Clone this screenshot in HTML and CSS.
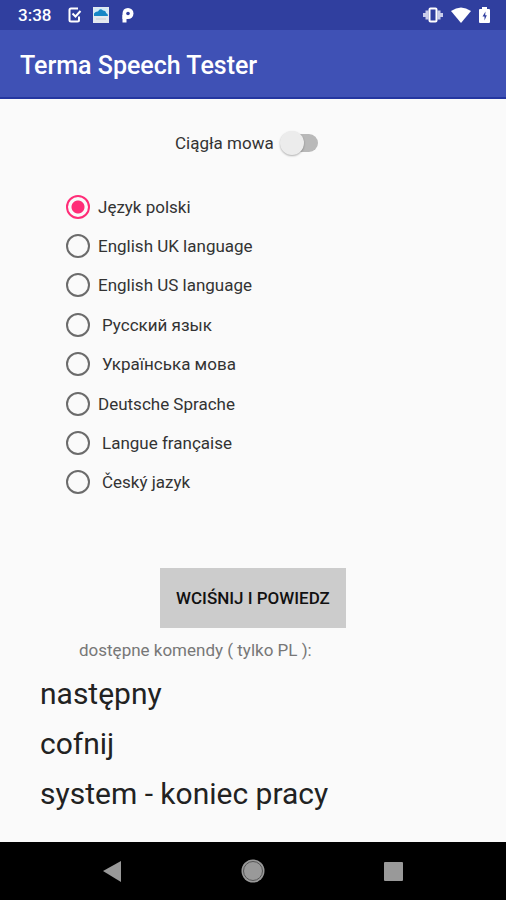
FILE: index.html
```html
<!DOCTYPE html>
<html lang="pl">
<head>
<meta charset="utf-8">
<meta name="viewport" content="width=device-width, initial-scale=1">
<title>Terma Speech Tester</title>
<link rel="stylesheet" href="styles.css">
</head>
<body>
<div class="status">
  <span class="clock">3:38</span>
  <svg class="status-icon" viewBox="0 0 16 16" aria-hidden="true"><path d="M12 1.500H5Q3.500 1.500 3.500 3V13Q3.500 14.500 5 14.500H11.500Q13 14.500 13 13V9.500" fill="none" stroke="#fff" stroke-width="2"/><path d="M6.500 6.500l3 3L14.500 4" fill="none" stroke="#fff" stroke-width="2"/></svg>
  <svg class="status-icon" viewBox="0 0 16 16" aria-hidden="true"><path d="M0 0h16v16H0z" fill="#e4e9ef"/><path d="M1 1h14v8H1z" fill="#d3eaf7"/><path d="M1 9V6.500Q3 4 5 4.500 7 .500 10 3.500q3 0 3 2.500 2 .500 2 3z" fill="#1686c5"/><path d="M3 12h10" stroke="#c8cdd3" stroke-width="1"/></svg>
  <svg class="status-icon" viewBox="0 0 16 16" aria-hidden="true"><path d="M4.500 15.500V8" stroke="#fff" stroke-width="4"/><path d="M2.500 7Q2.500 1 8 1a5.500 5.500 0 0 1 0 11H2.500z" fill="#fff"/><circle cx="8" cy="6.500" r="1.800" fill="#303f9f"/></svg>
  <span class="status-right">
    <svg class="vibrate" viewBox="0 0 20 16" aria-hidden="true"><path d="M4 3.500v9M16 3.500v9M1 6v4M19 6v4" stroke="#c9cdea" stroke-width="3"/><rect x="6.500" y="1.500" width="7" height="13" rx="1" fill="#303f9f" stroke="#fff" stroke-width="2"/></svg>
    <svg class="wifi" viewBox="0 0 20 16" aria-hidden="true"><path d="M0 4Q10-3 20 4L10 16z" fill="#fff"/></svg>
    <svg class="battery" viewBox="0 0 11 16" aria-hidden="true"><path d="M3 0h5v2h2q1 0 1 1v12q0 1-1 1H1q-1 0-1-1V3q0-1 1-1h2z" fill="#fff"/><path d="M6.500 4.500L3.500 9.500h2V13.500L7.800 8.300H6.200z" fill="#303f9f"/></svg>
  </span>
</div>
<header class="app-bar"><h1>Terma Speech Tester</h1></header>
<main>
  <label class="switch-row">Ciągła mowa <input class="switch" type="checkbox" role="switch"></label>
  <div class="languages" role="radiogroup" aria-label="Język">
    <label><input type="radio" name="lang" checked><span>Język polski</span></label>
    <label><input type="radio" name="lang"><span>English UK language</span></label>
    <label><input type="radio" name="lang"><span>English US language</span></label>
    <label class="spaced"><input type="radio" name="lang"><span>Русский язык</span></label>
    <label class="spaced"><input type="radio" name="lang"><span>Українська мова</span></label>
    <label><input type="radio" name="lang"><span>Deutsche Sprache</span></label>
    <label class="spaced"><input type="radio" name="lang"><span>Langue française</span></label>
    <label class="spaced"><input type="radio" name="lang"><span>Český jazyk</span></label>
  </div>
  <button class="speak" type="button">WCIŚNIJ I POWIEDZ</button>
  <p class="hint">dostępne komendy ( tylko PL ):</p>
  <ul class="commands">
    <li>następny</li>
    <li>cofnij</li>
    <li>system - koniec pracy</li>
  </ul>
</main>
<nav class="nav-bar">
  <button type="button" aria-label="Wstecz"><svg viewBox="0 0 24 24"><path d="M3 12L21 2v21z" fill="#999" stroke-linejoin="round"/></svg></button>
  <button type="button" aria-label="Ekran główny"><svg viewBox="0 0 24 24"><circle cx="12" cy="12" r="11.500" fill="#999"/><circle cx="12" cy="12" r="9.500" fill="none" stroke="#555" stroke-width="1"/></svg></button>
  <button type="button" aria-label="Ostatnie"><svg viewBox="0 0 24 24"><rect x="2" y="3" width="19" height="19" rx="1" fill="#999"/></svg></button>
</nav>
</body>
</html>
```

FILE: styles.css
```css
* {
  box-sizing: border-box;
}

body {
  margin: 0;
  min-height: 100vh;
  display: flex;
  flex-direction: column;
  background: #fafafa;
  color: #222;
  font-family: Roboto, "Liberation Sans", sans-serif;
}

.status {
  display: flex;
  align-items: center;
  height: 30px;
  padding: 0 16px 0 18px;
  background: #303f9f;
  color: #fff;
}

.clock {
  width: 48px;
  font-size: 17px;
  font-weight: 500;
  line-height: 32px;
}

.status-icon {
  width: 16px;
  height: 16px;
  margin-right: 11px;
}

.status-right {
  display: flex;
  align-items: center;
  gap: 8px;
  margin-left: auto;
}

.vibrate,
.wifi {
  width: 20px;
  height: 16px;
}

.battery {
  width: 11px;
  height: 16px;
}

.app-bar {
  height: 69px;
  padding: 0 20px;
  background: #3f51b5;
  border-bottom: 2px solid #2436a0;
}

.app-bar h1 {
  margin: 0;
  color: #fff;
  font-size: 25px;
  font-weight: 500;
  line-height: 72px;
}

main {
  flex: 1;
  display: flex;
  flex-direction: column;
}

.switch-row {
  display: flex;
  align-items: center;
  gap: 5px;
  height: 40px;
  margin: 24px 0 0 175px;
  color: #333;
  font-size: 17px;
}

.switch {
  appearance: none;
  position: relative;
  width: 40px;
  height: 26px;
  margin: 0;
}

.switch::before {
  content: "";
  position: absolute;
  inset: 4px 1px 4px 6px;
  border-radius: 9px;
  background: #b9b9b9;
}

.switch::after {
  content: "";
  position: absolute;
  top: 1px;
  left: 1px;
  width: 24px;
  height: 24px;
  border-radius: 50%;
  background: #ececec;
  box-shadow: 0 1px 2px rgba(0, 0, 0, 0.3);
}

.switch:checked::after {
  left: 15px;
  background: #ff4081;
}

.languages {
  display: grid;
  grid-template-rows: repeat(8, 1fr);
  height: 315px;
  margin: 24px 0 0 66px;
  color: #333;
  font-size: 17px;
}

.languages label {
  display: flex;
  align-items: center;
  gap: 8px;
}

.languages .spaced {
  gap: 12px;
}

.languages input {
  appearance: none;
  width: 24px;
  height: 24px;
  margin: 0;
  border: 2px solid #6b6b6b;
  border-radius: 50%;
}

.languages input:checked {
  border-color: #ff2d78;
  background: radial-gradient(circle, #ff2d78 6px, transparent 7px);
}

.speak {
  align-self: flex-start;
  height: 60px;
  margin: 66px 0 0 160px;
  padding: 0 16px 1px;
  border: 0;
  background: #ccc;
  color: #111;
  font-family: inherit;
  font-size: 17px;
  font-weight: 500;
}

.hint {
  margin: 8px 0 0 79px;
  color: #777;
  font-size: 17px;
  line-height: 28px;
}

.commands {
  margin: 5px 0 20px 40px;
  padding: 0;
  list-style: none;
  font-size: 30px;
  line-height: 50px;
}

.nav-bar {
  display: flex;
  justify-content: space-around;
  align-items: center;
  height: 58px;
  padding: 0 42px;
  background: #000;
}

.nav-bar button {
  padding: 0;
  border: 0;
  background: none;
}

.nav-bar svg {
  display: block;
  width: 24px;
  height: 24px;
}
```
